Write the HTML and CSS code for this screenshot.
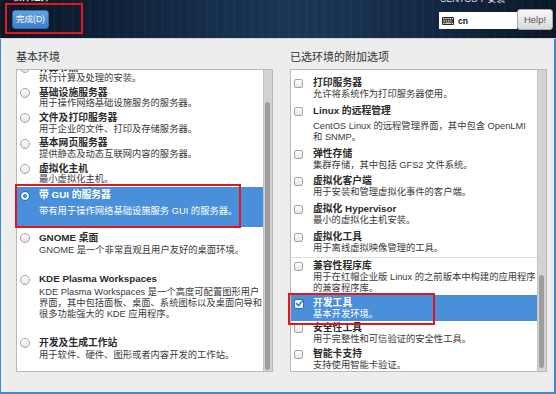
FILE: index.html
```html
<!DOCTYPE html>
<html lang="zh-CN">
<head>
<meta charset="utf-8">
<title>软件选择</title>
<link rel="stylesheet" href="styles.css">
</head>
<body>
<div class="window">
  <header class="topbar">
    <div class="topbar-left">
      <div class="spoke-title">软件选择</div>
      <button class="done-btn">完成(D)</button>
    </div>
    <div class="topbar-right">
      <div class="product">CENTOS 7 安装</div>
      <div class="tools">
        <div class="kbd-layout">
          <svg class="kbd-icon" width="12" height="8" viewBox="0 0 12 8">
            <rect width="12" height="8" rx="1" fill="#2a2a2a"/>
            <g fill="#e8e8e8">
              <rect x="1" y="1" width="1.4" height="1.3"/><rect x="3.2" y="1" width="1.4" height="1.3"/><rect x="5.4" y="1" width="1.4" height="1.3"/><rect x="7.6" y="1" width="1.4" height="1.3"/><rect x="9.8" y="1" width="1.2" height="1.3"/>
              <rect x="1.6" y="3.3" width="1.4" height="1.3"/><rect x="3.8" y="3.3" width="1.4" height="1.3"/><rect x="6" y="3.3" width="1.4" height="1.3"/><rect x="8.2" y="3.3" width="1.4" height="1.3"/>
              <rect x="1" y="5.6" width="1.4" height="1.3"/><rect x="3.2" y="5.6" width="5.6" height="1.3"/><rect x="9.6" y="5.6" width="1.4" height="1.3"/>
            </g>
          </svg>
          <span class="kbd-code">cn</span>
        </div>
        <button class="help-btn">Help!</button>
      </div>
    </div>
  </header>

  <main class="content">
    <section class="pane">
      <h2 class="pane-title">基本环境</h2>
      <div class="listbox">
        <div class="list-view">
          <div class="list-inner env-list">
            <div class="row"><span class="radio"></span><div class="txt"><div class="t">计算节点</div><div class="d">执行计算及处理的安装。</div></div></div>
            <div class="row"><span class="radio"></span><div class="txt"><div class="t">基础设施服务器</div><div class="d">用于操作网络基础设施服务的服务器。</div></div></div>
            <div class="row"><span class="radio"></span><div class="txt"><div class="t">文件及打印服务器</div><div class="d">用于企业的文件、打印及存储服务器。</div></div></div>
            <div class="row"><span class="radio"></span><div class="txt"><div class="t">基本网页服务器</div><div class="d">提供静态及动态互联网内容的服务器。</div></div></div>
            <div class="row"><span class="radio"></span><div class="txt"><div class="t">虚拟化主机</div><div class="d">最小虚拟化主机。</div></div></div>
            <div class="row sel"><span class="radio on"></span><div class="txt"><div class="t">带 GUI 的服务器</div><div class="d">带有用于操作网络基础设施服务 GUI 的服务器。</div></div></div>
            <div class="row loose"><span class="radio"></span><div class="txt"><div class="t">GNOME 桌面</div><div class="d">GNOME 是一个非常直观且用户友好的桌面环境。</div></div></div>
            <div class="row loose"><span class="radio"></span><div class="txt"><div class="t">KDE Plasma Workspaces</div><div class="d">KDE Plasma Workspaces 是一个高度可配置图形用户<br>界面，其中包括面板、桌面、系统图标以及桌面向导和<br>很多功能强大的 KDE 应用程序。</div></div></div>
            <div class="row loose"><span class="radio"></span><div class="txt"><div class="t">开发及生成工作站</div><div class="d">用于软件、硬件、图形或者内容开发的工作站。</div></div></div>
          </div>
        </div>
        <div class="scrollbar"><div class="thumb thumb-env"></div></div>
      </div>
    </section>

    <section class="pane">
      <h2 class="pane-title">已选环境的附加选项</h2>
      <div class="listbox">
        <div class="list-view">
          <div class="list-inner addon-list">
            <div class="row"><span class="check"></span><div class="txt"><div class="t">打印服务器</div><div class="d">允许将系统作为打印服务器使用。</div></div></div>
            <div class="row wide-gap"><span class="check"></span><div class="txt"><div class="t">Linux 的远程管理</div><div class="d">CentOS Linux 的远程管理界面，其中包含 OpenLMI<br>和 SNMP。</div></div></div>
            <div class="row"><span class="check"></span><div class="txt"><div class="t">弹性存储</div><div class="d">集群存储，其中包括 GFS2 文件系统。</div></div></div>
            <div class="row"><span class="check"></span><div class="txt"><div class="t">虚拟化客户端</div><div class="d">用于安装和管理虚拟化事件的客户端。</div></div></div>
            <div class="row"><span class="check"></span><div class="txt"><div class="t">虚拟化 Hypervisor</div><div class="d">最小的虚拟化主机安装。</div></div></div>
            <div class="row"><span class="check"></span><div class="txt"><div class="t">虚拟化工具</div><div class="d">用于离线虚拟映像管理的工具。</div></div></div>
            <div class="separator"></div>
            <div class="row short-b"><span class="check"></span><div class="txt"><div class="t">兼容性程序库</div><div class="d">用于在红帽企业版 Linux 的之前版本中构建的应用程序<br>的兼容程序库。</div></div></div>
            <div class="row sel sel-addon"><span class="check on"><svg width="9" height="9" viewBox="0 0 9 9"><path d="M1.6 4.6 L3.6 6.6 L7.6 1.8" fill="none" stroke="#3d7fc8" stroke-width="1.6" stroke-linecap="round" stroke-linejoin="round"/></svg></span><div class="txt"><div class="t">开发工具</div><div class="d">基本开发环境。</div></div></div>
            <div class="row tight"><span class="check"></span><div class="txt"><div class="t">安全性工具</div><div class="d">用于完整性和可信验证的安全性工具。</div></div></div>
            <div class="row"><span class="check"></span><div class="txt"><div class="t">智能卡支持</div><div class="d">支持使用智能卡验证。</div></div></div>
          </div>
        </div>
        <div class="scrollbar"><div class="thumb thumb-addon"></div></div>
      </div>
    </section>
  </main>

  <div class="annot annot-done"></div>
  <div class="annot annot-env"></div>
  <div class="annot annot-addon"></div>
</div>
</body>
</html>
```

FILE: styles.css
```css
* {
  box-sizing: border-box;
  margin: 0;
  padding: 0;
}

html, body {
  width: 556px;
  height: 394px;
  overflow: hidden;
}

body {
  font-family: "Liberation Sans", "Noto Sans CJK SC", sans-serif;
  color: #2e3436;
  background: #ededed;
}

.window {
  position: relative;
  width: 556px;
  height: 394px;
  display: flex;
  flex-direction: column;
}

/* ---------- header ---------- */
.topbar {
  flex: none;
  height: 39px;
  display: flex;
  justify-content: space-between;
  border-bottom: 1px solid #d4d4d4;
  background:
    repeating-linear-gradient(90deg, rgba(255,255,255,0.03) 0 1px, rgba(0,0,0,0) 1px 4px, rgba(0,0,0,0.06) 4px 5px, rgba(0,0,0,0) 5px 9px),
    linear-gradient(90deg, #0a1727 0%, #0f2138 18%, #173150 42%, #1b3758 55%, #142a46 75%, #0b1828 100%);
}

.topbar-left {
  display: flex;
  flex-direction: column;
  align-items: flex-start;
  padding-left: 12px;
}

.spoke-title {
  margin-top: -9.5px;
  height: 12px;
  line-height: 12px;
  font-size: 9.5px;
  font-weight: 700;
  color: #f2f2f2;
}

.done-btn {
  margin-top: 7.5px;
  width: 37px;
  height: 19px;
  border: 1px solid #2f6aad;
  border-radius: 3px;
  background: linear-gradient(#64a3df, #3c7ec6);
  color: #fff;
  font-family: "Liberation Sans", "Noto Sans CJK SC", sans-serif;
  font-size: 8.5px;
  line-height: 17px;
  text-align: center;
}

.topbar-right {
  display: flex;
  flex-direction: column;
  align-items: flex-start;
  padding-right: 3px;
}

.product {
  margin-top: -6px;
  margin-left: 1px;
  height: 11px;
  line-height: 11px;
  font-size: 9px;
  color: #e6e6e6;
}

.tools {
  margin-top: 4px;
  display: flex;
  align-items: flex-start;
}

.kbd-layout {
  margin-top: 3px;
  width: 78px;
  height: 17px;
  background: #fff;
  display: flex;
  align-items: center;
  padding-left: 3px;
}

.kbd-icon {
  display: block;
  flex: none;
}

.kbd-code {
  margin-left: 4px;
  font-size: 8.5px;
  font-weight: 700;
  color: #111;
}

.help-btn {
  width: 36px;
  height: 21px;
  border: 1px solid #a9a9a9;
  border-radius: 3px;
  background: linear-gradient(#f7f7f7, #d9d9d9);
  color: #555;
  font-family: "Liberation Sans", sans-serif;
  font-size: 9.5px;
  text-align: center;
}

/* ---------- content ---------- */
.content {
  flex: 1;
  display: flex;
  gap: 17px;
  padding: 11px 7px 0 15px;
  border-left: 1px solid #3f88d6;
  border-right: 2px solid #3f88d6;
  border-bottom: 2px solid #3f88d6;
}

.pane {
  width: 257px;
  display: flex;
  flex-direction: column;
}

.pane-title {
  font-size: 11px;
  font-weight: 400;
  line-height: 14px;
  height: 14px;
  margin-bottom: 5px;
  color: #2e3436;
}

.listbox {
  height: 303px;
  display: flex;
  border: 1px solid #b9b9b9;
  background: #fff;
}

.list-view {
  flex: 1;
  min-width: 0;
  overflow: hidden;
}

.scrollbar {
  flex: none;
  width: 9px;
  background: #d3d3d3;
  border-left: 1px solid #c3c3c3;
}

.thumb {
  margin-left: 1px;
  width: 5px;
  border-radius: 3px;
  background: #9d9d9d;
}

.thumb-env {
  margin-top: 32px;
  height: 268px;
}

.thumb-addon {
  margin-top: 205px;
  height: 93px;
}

.env-list {
  margin-top: -9.5px;
}

.addon-list {
  padding-top: 5px;
}

/* ---------- rows ---------- */
.row {
  display: flex;
  align-items: flex-start;
  padding: 2px 0 1.8px 3px;
}

.txt {
  min-width: 0;
}

.t {
  font-size: 9.8px;
  font-weight: 700;
  line-height: 10.5px;
  white-space: nowrap;
  color: #2b2b2b;
}

.d {
  font-size: 9.3px;
  line-height: 11px;
  white-space: nowrap;
  color: #3a3a3a;
}

.radio {
  flex: none;
  width: 10px;
  height: 10px;
  margin: 0.25px 9px 0 0;
  border-radius: 50%;
  border: 1px solid #a5a5a5;
  background: linear-gradient(#ffffff, #e4e4e4);
}

.radio.on {
  border-color: #2c69ad;
  background: radial-gradient(circle, #4a8bd2 0 1.6px, #e9f1fa 2.2px);
}

.env-list .row.sel {
  padding: 3.5px 0 10px 3px;
}

.env-list .row.sel .d {
  margin-top: 5px;
}

.env-list .row.loose {
  padding: 6px 0 12px 3px;
}

.env-list .row.loose .d {
  margin-top: 2px;
}

.row.sel {
  background: #4a8fd9;
}

.row.sel .t,
.row.sel .d {
  color: #fff;
}

/* addon list */
.addon-list .row {
  padding: 3px 0 2.75px 3px;
}

.addon-list .d {
  margin-top: 0.5px;
}

.check {
  flex: none;
  width: 9px;
  height: 9px;
  margin: 1px 10px 0 0;
  border: 1px solid #a5a5a5;
  border-radius: 2px;
  background: linear-gradient(#ffffff, #e4e4e4);
  display: flex;
  align-items: center;
  justify-content: center;
}

.check svg {
  display: block;
  flex: none;
}

.check.on {
  width: 10px;
  height: 10px;
  margin-top: 0.5px;
  margin-right: 9px;
  border-color: #2c69ad;
  background: #f4f8fd;
}

.addon-list .row.wide-gap .d {
  margin-top: 4.5px;
}

.addon-list .row.short-b {
  padding-bottom: 1.5px;
}

.addon-list .row.sel-addon {
  padding: 3px 0 1.5px 3px;
}

.addon-list .row.sel-addon .d {
  margin-top: 0;
}

.addon-list .row.tight {
  padding: 2px 0 1px 3px;
}

.separator {
  height: 1px;
  background: #dedede;
}

/* ---------- annotations ---------- */
.annot {
  position: absolute;
  border: 2px solid #e3161d;
  pointer-events: none;
}

.annot-done {
  left: 5px;
  top: 3px;
  width: 78px;
  height: 31px;
}

.annot-env {
  left: 15px;
  top: 184px;
  width: 226px;
  height: 44px;
}

.annot-addon {
  left: 288px;
  top: 293px;
  width: 147px;
  height: 32px;
}
```
